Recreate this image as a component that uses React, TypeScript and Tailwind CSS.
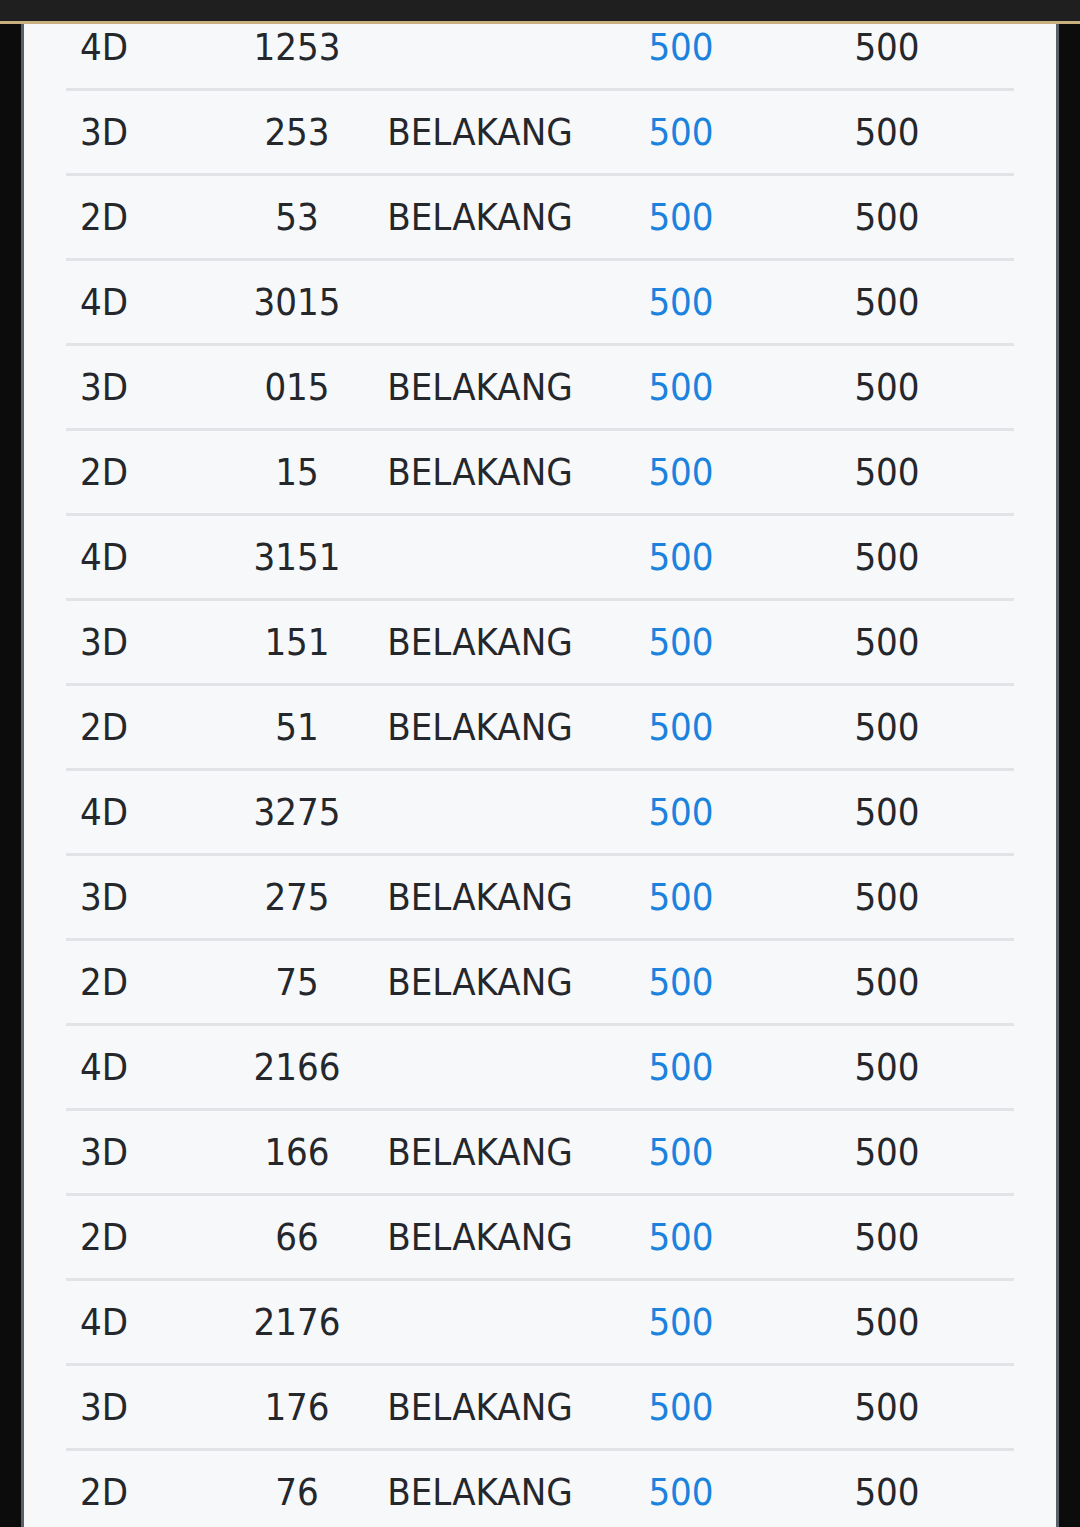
import React from "react";

type Row = { type: string; num: string; pos: string };

const groups: [string, string, string][] = [
  ["1253", "253", "53"],
  ["3015", "015", "15"],
  ["3151", "151", "51"],
  ["3275", "275", "75"],
  ["2166", "166", "66"],
  ["2176", "176", "76"],
];

const rows: Row[] = groups.flatMap(([a, b, c]) => [
  { type: "4D", num: a, pos: "" },
  { type: "3D", num: b, pos: "BELAKANG" },
  { type: "2D", num: c, pos: "BELAKANG" },
]);

const App: React.FC = () => {
  return (
    <div
      className="relative min-h-[1527px] bg-[#0c0c0c] overflow-hidden"
      style={{ fontFamily: '"DejaVu Sans Condensed", "DejaVu Sans", sans-serif' }}
    >
      {/* top bar laying over the list */}
      <div className="absolute inset-x-0 top-0 z-10 h-[24px] bg-[#1f1f1f] border-b-[3px] border-[#c8b17f]"></div>

      <div className="mx-[21px] min-h-[1527px] border-x-[3px] border-[#5b6169] bg-[#f7f8fa] pt-[6px] pl-[42px] pr-[42px]">
        {rows.map((r, i) => (
          <div
            key={i}
            className="grid grid-cols-[134px_194px_172px_230px_182px_1fr] items-center h-[85px] border-b-[3px] border-[#e1e3e7] text-[38px] text-[#24272b] leading-none"
          >
            <div className="pl-[14px]">{r.type}</div>
            <div className="flex justify-center">{r.num}</div>
            <div className="flex justify-center whitespace-nowrap">{r.pos}</div>
            <div className="flex justify-center text-[#1b82de]">500</div>
            <div className="flex justify-center">500</div>
            <div></div>
          </div>
        ))}
      </div>
    </div>
  );
};

export default App;
